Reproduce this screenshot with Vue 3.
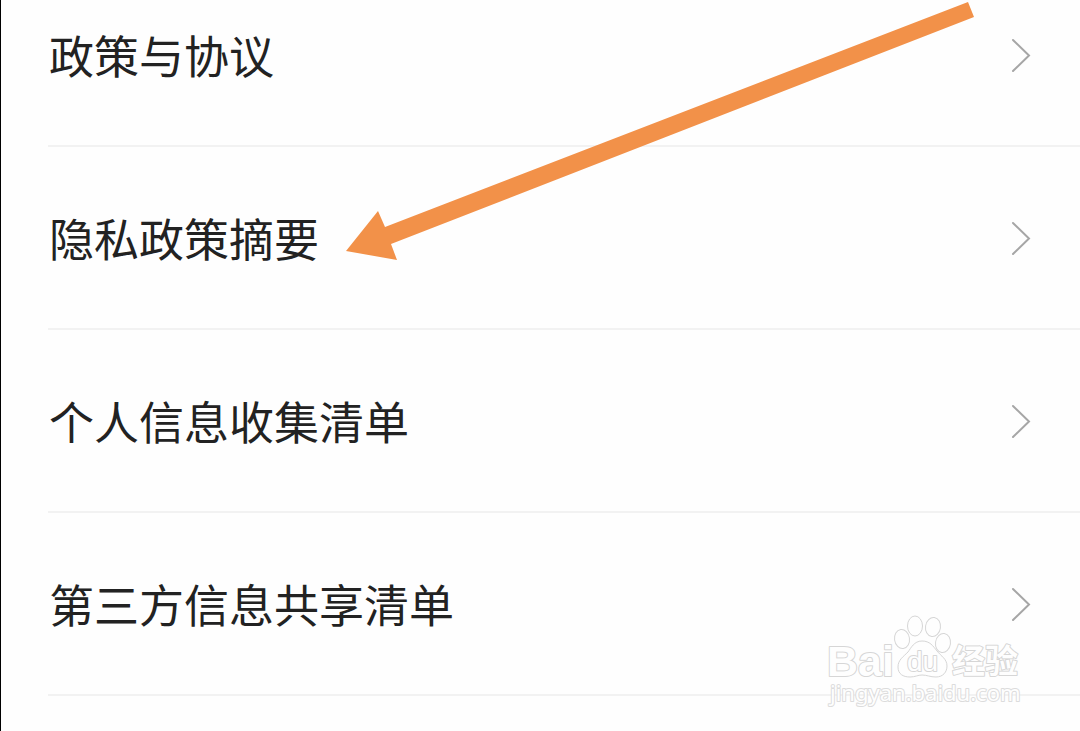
<script setup>
const items = ['政策与协议', '隐私政策摘要', '个人信息收集清单', '第三方信息共享清单']
</script>

<template>
  <main class="screen">
    <nav class="list" aria-label="政策">
      <a v-for="item in items" :key="item" class="row" href="#">
        <span class="label">{{ item }}</span>
        <svg class="chevron" width="20" height="34" viewBox="0 0 20 34" aria-hidden="true">
          <path d="M2 2 L18 17.5 L2 33" />
        </svg>
      </a>
    </nav>

    <svg class="arrow" width="640" height="270" viewBox="340 0 640 270" aria-hidden="true">
      <polygon points="346,251 378,211 385,227 968,2 974,17 391,244 397,260" />
    </svg>

    <svg class="watermark" width="210" height="105" viewBox="0 0 210 105" aria-label="Baidu 经验">
      <text class="brand" x="7" y="66">Bai</text>
      <ellipse cx="95" cy="16" rx="7.5" ry="10" />
      <ellipse cx="113" cy="17" rx="7.5" ry="9.5" transform="rotate(8 113 17)" />
      <ellipse cx="82" cy="29" rx="7.5" ry="9.5" transform="rotate(-8 82 29)" />
      <ellipse cx="123" cy="33" rx="7.5" ry="9.5" transform="rotate(8 123 33)" />
      <path d="M102 31 C94 31 91 38 88 42 C83 47 78 50 78 57 C78 64 83 67 90 67 C95 67 98 65 102 65 C107 65 110 67 116 67 C123 67 127 62 127 56 C127 49 121 46 117 41 C113 36 110 31 102 31 Z" />
      <text class="du" x="87" y="61">du</text>
      <text class="cjk" x="132" y="63">经验</text>
      <text class="url" x="10" y="91">jingyan.baidu.com</text>
    </svg>
  </main>
</template>

<style>
body {
  margin: 0;
  background: #fefefe;
}
</style>

<style scoped>
.screen {
  position: relative;
  box-sizing: border-box;
  height: 100vh;
  overflow: hidden;
  border-left: 1px solid #000;
  background: #fefefe;
  font-family: "Noto Sans CJK SC", sans-serif;
}

.list {
  margin: -36px 0 0 47px;
}

.row {
  display: flex;
  align-items: center;
  justify-content: space-between;
  box-sizing: border-box;
  height: 183px;
  padding-right: 49px;
  border-bottom: 2px solid #f2f2f2;
  color: #222;
  text-decoration: none;
}

.label {
  padding-left: 1px;
  font-size: 45px;
  line-height: 64px;
}

.chevron path {
  fill: none;
  stroke: #a6a6a6;
  stroke-width: 2;
  stroke-linecap: round;
}

.arrow {
  position: absolute;
  top: 0;
  left: 339px;
  pointer-events: none;
}

.arrow polygon {
  fill: #f29149;
}

.watermark {
  position: absolute;
  right: 50px;
  bottom: 16px;
  pointer-events: none;
  fill: #fefefe;
  stroke: #d6d6d6;
  stroke-width: 1;
}

.watermark text {
  font-weight: 700;
  paint-order: stroke;
  stroke-width: 2;
  stroke-linejoin: round;
}

.brand {
  font-family: "Liberation Sans", sans-serif;
  font-size: 43px;
}

.watermark .du {
  font-family: "Liberation Sans", sans-serif;
  font-size: 28px;
  font-weight: 400;
}

.cjk {
  font-family: "Noto Sans CJK SC", sans-serif;
  font-size: 33px;
}

.watermark .url {
  font-family: "Noto Sans", sans-serif;
  font-size: 22px;
  font-weight: 400;
  stroke: #dcdcdc;
}
</style>
